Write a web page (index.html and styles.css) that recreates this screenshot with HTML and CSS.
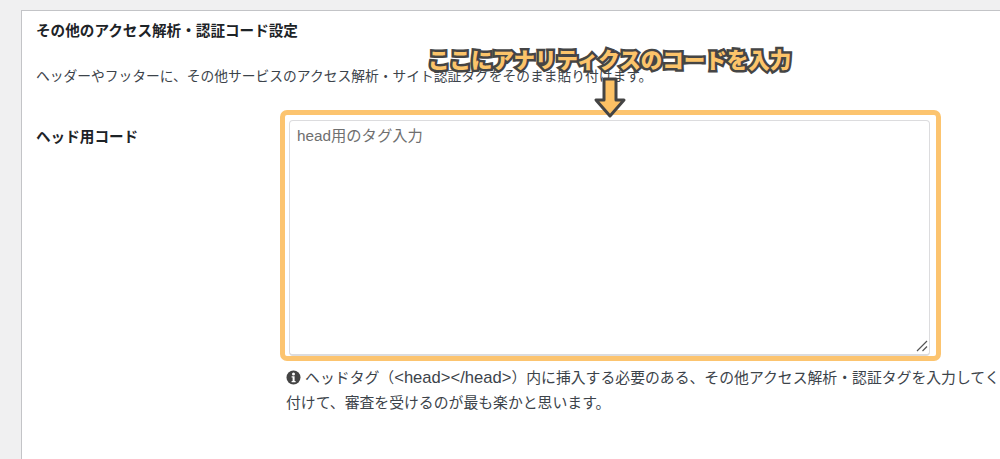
FILE: index.html
```html
<!DOCTYPE html>
<html lang="ja">
<head>
<meta charset="utf-8">
<title>その他のアクセス解析・認証コード設定</title>
<link rel="stylesheet" href="styles.css">
</head>
<body>
<main class="panel">
  <h2 class="title">その他のアクセス解析・認証コード設定</h2>
  <p class="lead">ヘッダーやフッターに、その他サービスのアクセス解析・サイト認証タグをそのまま貼り付けます。</p>
  <div class="row">
    <div class="label">ヘッド用コード</div>
    <div class="field">
      <div class="frame">
        <div class="textarea">
          <span class="placeholder">head用のタグ入力</span>
          <svg class="grip" width="12" height="12" viewBox="0 0 12 12" aria-hidden="true"><path d="M1 11 11 1M6.5 11 11 6.5" fill="none" stroke="#555" stroke-width="1.2"/></svg>
        </div>
      </div>
      <p class="help"><svg class="info" width="15" height="15" viewBox="0 0 15 15" aria-hidden="true"><circle cx="7.5" cy="7.5" r="7" fill="#444"/><circle cx="7.5" cy="3.9" r="1.5" fill="#fff"/><path d="M5.6 6.2h3v4.7h1v1.4H5.6v-1.4h1V7.6h-1z" fill="#fff"/></svg> ヘッドタグ（<span class="latin">&lt;head&gt;&lt;/head&gt;</span>）内に挿入する必要のある、その他アクセス解析・認証タグを入力してく<br>付けて、審査を受けるのが最も楽かと思います。</p>
    </div>
  </div>
</main>
<div class="callout">ここにアナリティクスのコードを入力</div>
<svg class="arrow" width="34" height="42" viewBox="0 0 34 42" aria-hidden="true"><path d="M11 2h12v21h8L17 39 3 23h8z" fill="#fcc165" stroke="#444" stroke-width="3" stroke-linejoin="round"/></svg>
</body>
</html>
```
FILE: styles.css
```css
html, body {
  margin: 0;
  height: 459px;
  overflow: hidden;
}
body {
  position: relative;
  background: #f0f0f1;
  font-family: "Liberation Sans", "Noto Sans CJK JP", sans-serif;
  color: #3c434a;
}
.panel {
  box-sizing: border-box;
  width: 979px;
  height: 449px;
  margin: 10px 0 0 21px;
  padding: 10px 14px 0;
  background: #fff;
  border: 1px solid #c3c4c7;
  border-right: 0;
  border-bottom: 0;
  overflow: hidden;
}
.title {
  margin: 0;
  font-size: 14.6px;
  line-height: 20px;
  font-weight: 700;
  color: #1d2327;
}
.lead {
  margin: 26px 0 0;
  font-size: 13.75px;
  line-height: 20px;
  white-space: nowrap;
}
.row {
  display: flex;
  margin-top: 23px;
}
.label {
  flex: none;
  width: 244px;
  padding-top: 17px;
  font-size: 14.6px;
  line-height: 20px;
  font-weight: 700;
  color: #1d2327;
}
.field {
  flex: none;
  width: 690px;
}
.frame {
  box-sizing: border-box;
  width: 661px;
  height: 251px;
  padding: 5px 6px 0 4px;
  border: 5px solid #fcc46f;
  border-radius: 7px;
  background: #fff;
}
.textarea {
  position: relative;
  box-sizing: border-box;
  height: 100%;
  padding: 5px 7px;
  border: 1px solid #dcdcde;
  border-bottom-width: 2px;
  border-radius: 4px;
}
.placeholder {
  font-size: 15.3px;
  line-height: 20px;
  color: #6f6f6f;
}
.grip {
  position: absolute;
  right: 1px;
  bottom: 2px;
}
.help {
  margin: 5px 0 0 6px;
  font-size: 14.85px;
  line-height: 25px;
  white-space: nowrap;
}
.latin {
  font-size: 16.6px;
  line-height: 20px;
}
.info {
  vertical-align: -2px;
}
.callout {
  position: absolute;
  left: 428px;
  top: 43px;
  font-family: "Noto Sans CJK JP", sans-serif;
  font-size: 21.5px;
  line-height: 32px;
  font-weight: 900;
  white-space: nowrap;
  color: #fcc46a;
  -webkit-text-stroke: 5px #454545;
  paint-order: stroke fill;
}
.arrow {
  position: absolute;
  left: 593px;
  top: 77px;
}
```
